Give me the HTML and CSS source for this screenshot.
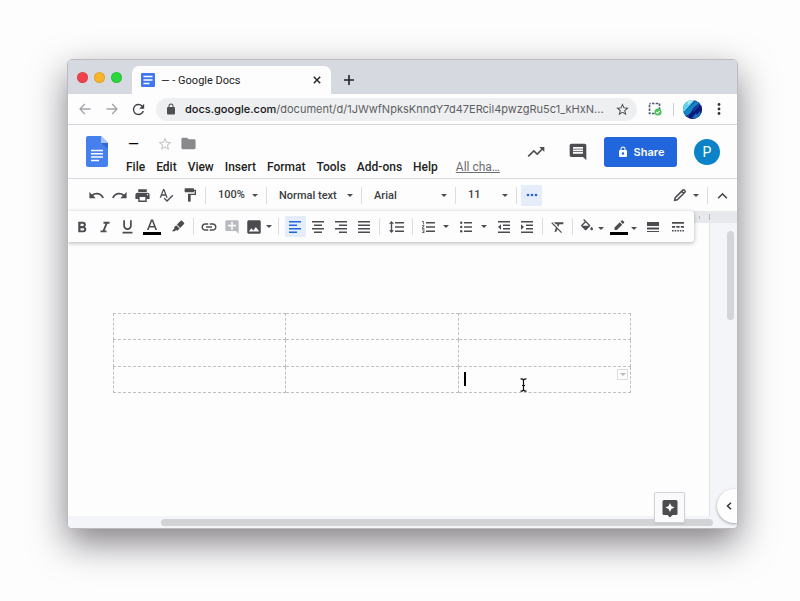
FILE: index.html
```html
<!DOCTYPE html>
<html lang="en">
<head>
<meta charset="utf-8">
<title>— - Google Docs</title>
<link rel="stylesheet" href="styles.css">
</head>
<body>
<main class="window">
  <div class="tabstrip">
    <div class="lights">
      <button class="light light-close" aria-label="Close window"></button>
      <button class="light light-min" aria-label="Minimize window"></button>
      <button class="light light-max" aria-label="Zoom window"></button>
    </div>
    <div class="tab">
      <svg class="favicon" viewBox="0 0 14 14"><rect width="14" height="14" rx="1" fill="#3f77ee"/><path d="M2.500 3.500h9M2.500 7h9M2.500 10.500h6" stroke="#fff" stroke-width="1.500"/></svg>
      <span class="tab-title">— - Google Docs</span>
      <button class="plain tab-close" aria-label="Close tab"><svg width="8" height="8" viewBox="0 0 8 8"><path d="M.8.8l6.400 6.400M7.200.8L.8 7.200" stroke="#222" stroke-width="1.400"/></svg></button>
    </div>
    <button class="plain new-tab" aria-label="New tab"><svg width="12" height="12" viewBox="0 0 12 12"><path d="M6 1v10M1 6h10" stroke="#222" stroke-width="1.600"/></svg></button>
  </div>

  <div class="navbar">
    <button class="plain nav-btn muted" aria-label="Back"><svg width="12" height="12" viewBox="0 0 12 12"><path d="M11.500 6H1.200M5.800 1L1 6l4.800 5" fill="none" stroke="currentColor" stroke-width="1.300"/></svg></button>
    <button class="plain nav-btn muted" aria-label="Forward"><svg width="12" height="12" viewBox="0 0 12 12"><path d="M.5 6h10.300M6.200 1L11 6l-4.800 5" fill="none" stroke="currentColor" stroke-width="1.300"/></svg></button>
    <button class="plain nav-btn" aria-label="Reload"><svg width="17" height="17" viewBox="0 0 24 24"><path fill="currentColor" d="M17.650 6.350A7.958 7.958 0 0 0 12 4a8 8 0 1 0 7.730 10h-2.080A6 6 0 1 1 12 6c1.660 0 3.140.69 4.220 1.780L13 11h7V4l-2.350 2.350z"/></svg></button>
    <div class="address">
      <svg width="12" height="12" viewBox="0 0 24 24"><path fill="#4d4f53" d="M18 8h-1V6A5 5 0 0 0 7 6v2H6a2 2 0 0 0-2 2v11a2 2 0 0 0 2 2h12a2 2 0 0 0 2-2V10a2 2 0 0 0-2-2zM9 8V6a3 3 0 0 1 6 0v2H9z"/></svg>
      <a class="url" href="#doc"><b>docs.google.com</b>/document/d/1JWwfNpksKnndY7d47ERcil4pwzgRu5c1_kHxN...</a>
      <button class="plain bookmark" aria-label="Bookmark"><svg width="15" height="15" viewBox="0 0 24 24"><path fill="#4a4c50" d="M22 9.240l-7.190-.62L12 2 9.190 8.630 2 9.240l5.460 4.730L5.820 21 12 17.270 18.180 21l-1.630-7.030L22 9.240zM12 15.400l-3.760 2.270 1-4.280-3.320-2.880 4.380-.38L12 6.100l1.710 4.040 4.380.38-3.320 2.880 1 4.280L12 15.400z"/></svg></button>
    </div>
    <button class="plain ext" aria-label="Capture extension"><svg width="14" height="14" viewBox="0 0 14 14"><rect x="1.500" y="1.500" width="10" height="10" fill="none" stroke="#4d5a75" stroke-width="1.600" stroke-dasharray="2.500 1.250" stroke-dashoffset="1.250"/><circle cx="10" cy="10" r="3.500" fill="#45c153"/><path d="M8.200 10l1.300 1.300 2.200-2.500" fill="none" stroke="#fff" stroke-width="1.100"/></svg></button>
    <span class="nav-rule"></span>
    <button class="plain profile" aria-label="Profile"><svg width="19" height="19" viewBox="0 0 19 19"><defs><clipPath id="round"><circle cx="9.500" cy="9.500" r="9.500"/></clipPath></defs><g clip-path="url(#round)"><path fill="#1b3a9c" d="M0 0h19v19H0z"/><path fill="#5ed5ee" d="M0 0h12L0 13z"/><path fill="#a7eef5" d="M4 0h7L5 5z"/><path fill="#1188c4" d="M1 12L13 1l3 2-6 5-2 5-5 3z"/><path fill="#0a1a7c" d="M6 15l4-5 1 2 6-7 2 1v9l-7 4H6z"/><path fill="#1d6cc0" d="M9 18l4-5 1 2 3-4 1 4-5 4z"/></g></svg></button>
    <button class="plain more" aria-label="Browser menu"><svg width="4" height="14" viewBox="0 0 4 14"><g fill="#333"><circle cx="2" cy="2.500" r="1.400"/><circle cx="2" cy="7" r="1.400"/><circle cx="2" cy="11.500" r="1.400"/></g></svg></button>
  </div>

  <header class="doc-head">
    <a class="logo" href="#home" aria-label="Docs home"><svg width="22" height="31" viewBox="0 0 22 31"><path fill="#4580ee" d="M2 0h13l7 7v22a2 2 0 0 1-2 2H2a2 2 0 0 1-2-2V2a2 2 0 0 1 2-2z"/><path fill="#a5c4fb" d="M15 0l7 7h-7z"/><path fill="#3467d2" d="M15 7h7v6z"/><path d="M5 14.500h12M5 17.800h12M5 21.100h12M5 24.400h8" stroke="#fff" stroke-width="1.500"/></svg></a>
    <div class="doc-info">
      <div class="title-row">
        <span class="doc-title">—</span>
        <button class="plain" aria-label="Star"><svg width="16" height="16" viewBox="0 0 24 24"><path fill="#c6c7ca" d="M22 9.240l-7.190-.62L12 2 9.190 8.630 2 9.240l5.460 4.730L5.820 21 12 17.270 18.180 21l-1.630-7.030L22 9.240zM12 15.400l-3.760 2.270 1-4.280-3.320-2.880 4.380-.38L12 6.100l1.710 4.040 4.380.38-3.320 2.880 1 4.280L12 15.400z"/></svg></button>
        <button class="plain" aria-label="Move"><svg width="17" height="17" viewBox="0 0 24 24"><path fill="#88898c" d="M10 4H4c-1.100 0-2 .9-2 2v12c0 1.100.9 2 2 2h16c1.100 0 2-.9 2-2V8c0-1.100-.9-2-2-2h-8l-2-2z"/></svg></button>
      </div>
      <nav class="menus">
        <button class="plain">File</button><button class="plain">Edit</button><button class="plain">View</button><button class="plain">Insert</button><button class="plain">Format</button><button class="plain">Tools</button><button class="plain">Add-ons</button><button class="plain">Help</button>
        <a class="saved" href="#history">All cha…</a>
      </nav>
    </div>
    <div class="head-actions">
      <button class="plain" aria-label="Activity"><svg width="20" height="20" viewBox="0 0 24 24"><path fill="#4c4e51" d="M16 6l2.290 2.290-4.880 4.880-4-4L2 16.590 3.410 18l6-6 4 4 6.300-6.290L22 12V6z"/></svg></button>
      <button class="plain" aria-label="Comments"><svg width="20" height="20" viewBox="0 0 24 24"><path fill="#4c4e51" d="M21.990 4c0-1.100-.89-2-1.990-2H4c-1.100 0-2 .9-2 2v12c0 1.100.9 2 2 2h14l4 4-.01-18zM18 14H6v-2h12v2zm0-3H6V9h12v2zm0-3H6V6h12v2z"/></svg></button>
      <button class="share"><svg width="12" height="12" viewBox="0 0 24 24"><path fill="#fff" d="M18 8h-1V6A5 5 0 0 0 7 6v2H6a2 2 0 0 0-2 2v10a2 2 0 0 0 2 2h12a2 2 0 0 0 2-2V10a2 2 0 0 0-2-2zM9 6a3 3 0 0 1 6 0v2H9zm3 11.500a2.500 2.500 0 1 1 0-5 2.500 2.500 0 0 1 0 5z"/></svg>Share</button>
      <button class="avatar" aria-label="Account">P</button>
    </div>
  </header>

  <div class="toolbar toolbar-main">
    <button class="plain" aria-label="Undo"><svg width="17" height="17" viewBox="0 0 24 24"><path d="M12.500 8c-2.650 0-5.050.99-6.900 2.600L2 7v9h9l-3.620-3.620c1.390-1.160 3.160-1.880 5.120-1.880 3.540 0 6.550 2.310 7.600 5.500l2.370-.78C21.080 11.030 17.150 8 12.500 8z"/></svg></button>
    <button class="plain" aria-label="Redo"><svg width="17" height="17" viewBox="0 0 24 24"><path d="M18.400 10.600C16.550 8.990 14.150 8 11.500 8c-4.650 0-8.580 3.030-9.960 7.220L3.900 16c1.050-3.190 4.050-5.500 7.600-5.500 1.950 0 3.730.72 5.120 1.880L13 16h9V7l-3.600 3.600z"/></svg></button>
    <button class="plain" aria-label="Print"><svg width="17" height="17" viewBox="0 0 24 24"><path d="M19 8H5c-1.660 0-3 1.340-3 3v6h4v4h12v-4h4v-6c0-1.660-1.340-3-3-3zm-3 11H8v-5h8v5zm3-7c-.55 0-1-.45-1-1s.45-1 1-1 1 .45 1 1-.45 1-1 1zm-1-9H6v4h12V3z"/></svg></button>
    <button class="plain" aria-label="Spelling check"><svg width="16" height="16" viewBox="0 0 24 24"><path d="M12.450 16h2.090L9.430 3H7.570L2.460 16h2.090l1.120-3h5.640l1.140 3zm-6.020-5L8.500 5.480 10.570 11H6.430zm15.160.59l-8.090 8.090L9.830 16l-1.410 1.410 5.090 5.090L23 13l-1.410-1.410z"/></svg></button>
    <button class="plain" aria-label="Paint format"><svg width="16" height="16" viewBox="0 0 24 24"><path d="M18 4V3c0-.55-.45-1-1-1H5c-.55 0-1 .45-1 1v4c0 .55.45 1 1 1h12c.55 0 1-.45 1-1V6h1v4H9v11c0 .55.45 1 1 1h2c.55 0 1-.45 1-1v-9h8V4h-3z"/></svg></button>
    <span class="sep"></span>
    <div class="pick raised"><select aria-label="Zoom"><option>100%</option></select></div>
    <span class="sep"></span>
    <div class="pick"><select aria-label="Style"><option>Normal text</option></select></div>
    <span class="sep"></span>
    <div class="pick"><select aria-label="Font"><option>Arial</option></select></div>
    <span class="sep"></span>
    <div class="pick raised"><select aria-label="Font size"><option>11</option></select></div>
    <span class="sep"></span>
    <button class="plain active" aria-label="More tools"><svg width="12" height="4" viewBox="0 0 12 4"><circle cx="2" cy="2" r="1.300"/><circle cx="6" cy="2" r="1.300"/><circle cx="10" cy="2" r="1.300"/></svg></button>
    <span></span>
    <button class="plain" aria-label="Editing mode"><svg width="14" height="14" viewBox="0 0 14 14"><path d="M1.700 12.300l.5-2.600 7.600-7.600a1 1 0 0 1 1.400 0l.7.7a1 1 0 0 1 0 1.400l-7.600 7.600zM8.600 3.400l2 2" fill="none" stroke="#4a4c4f" stroke-width="1.500"/></svg></button>
    <span class="caret"></span>
    <span class="sep"></span>
    <button class="plain" aria-label="Hide menus"><svg width="17" height="17" viewBox="0 0 24 24"><path d="M12 8l-7 7 1.700 1.700L12 11.400l5.300 5.300L19 15z"/></svg></button>
  </div>

  <section class="workspace">
    <div class="toolbar toolbar-format">
      <button class="plain" aria-label="Bold"><svg width="18" height="18" viewBox="0 0 24 24"><path d="M15.600 11.790c.97-.67 1.650-1.770 1.650-2.790 0-2.260-1.750-4-4-4H7v14h7.040c2.090 0 3.710-1.700 3.710-3.790 0-1.520-.86-2.820-2.150-3.420zM10 7.500h3c.83 0 1.500.67 1.500 1.500s-.67 1.500-1.500 1.500h-3v-3zm3.500 9H10v-3h3.500c.83 0 1.500.67 1.500 1.500s-.67 1.500-1.500 1.500z"/></svg></button>
      <button class="plain" aria-label="Italic"><svg width="18" height="18" viewBox="0 0 24 24"><path d="M10 5v2.500h2.600l-3.700 9H6V19h8v-2.500h-2.400l3.700-9H18V5z"/></svg></button>
      <button class="plain" aria-label="Underline"><svg width="17" height="17" viewBox="0 0 24 24"><path d="M12 17c3.310 0 6-2.690 6-6V3h-2.500v8c0 1.930-1.570 3.500-3.500 3.500S8.500 12.930 8.500 11V3H6v8c0 3.310 2.690 6 6 6zm-7 2.500V22h14v-2.500H5z"/></svg></button>
      <button class="plain" aria-label="Text color"><svg width="18" height="18" viewBox="0 0 18 18"><path d="M8 1.500L3.900 12h1.700l.9-2.400h5L12.400 12h1.700L10 1.500zM7.100 8.100L9 3.200l1.900 4.900z"/><path fill="#000" d="M0 14h18v3H0z"/></svg></button>
      <button class="plain" aria-label="Highlight color"><svg width="14" height="14" viewBox="0 0 14 14"><path d="M9.700.8a1 1 0 0 1 1.400 0L13 2.700a1 1 0 0 1 0 1.400L9.200 7.900 5.900 4.600zM5.200 5.200l3.400 3.400-1.700 1.700a1 1 0 0 1-1.400 0l-.4-.4-1.300 1.300H.8l2.700-2.700-.1-.1a1 1 0 0 1 0-1.400z"/></svg></button>
      <span class="sep"></span>
      <button class="plain" aria-label="Insert link"><svg width="18" height="18" viewBox="0 0 24 24"><path d="M3.900 12c0-1.710 1.390-3.100 3.100-3.100h4V7H7c-2.760 0-5 2.240-5 5s2.240 5 5 5h4v-1.900H7c-1.710 0-3.100-1.390-3.100-3.100zM8 13h8v-2H8v2zm9-6h-4v1.900h4c1.710 0 3.100 1.390 3.100 3.100s-1.390 3.100-3.100 3.100h-4V17h4c2.760 0 5-2.240 5-5s-2.240-5-5-5z"/></svg></button>
      <button class="plain faded" aria-label="Add comment"><svg width="16" height="16" viewBox="0 0 24 24"><path d="M22 4c0-1.100-.9-2-2-2H4c-1.100 0-2 .9-2 2v12c0 1.100.9 2 2 2h14l4 4V4zm-4 7.200h-4.800V16h-2.400v-4.800H6V8.800h4.800V4h2.400v4.800H18v2.400z"/></svg></button>
      <button class="plain" aria-label="Insert image"><svg width="18" height="18" viewBox="0 0 24 24"><path d="M21 19V5c0-1.100-.9-2-2-2H5c-1.100 0-2 .9-2 2v14c0 1.100.9 2 2 2h14c1.100 0 2-.9 2-2zM8.500 13.500l2.500 3.010L14.500 12l4.500 6H5l3.500-4.500z"/></svg></button>
      <span class="caret"></span>
      <span class="sep"></span>
      <button class="plain active" aria-label="Align left"><svg width="12" height="12" viewBox="0 0 12 12"><path d="M0 0h12v1.500H0zM0 3.500h8V5H0zM0 7h12v1.500H0zM0 10.500h8V12H0z"/></svg></button>
      <button class="plain" aria-label="Align center"><svg width="12" height="12" viewBox="0 0 12 12"><path d="M0 0h12v1.500H0zM2 3.500h8V5H2zM0 7h12v1.500H0zM2 10.500h8V12H2z"/></svg></button>
      <button class="plain" aria-label="Align right"><svg width="12" height="12" viewBox="0 0 12 12"><path d="M0 0h12v1.500H0zM4 3.500h8V5H4zM0 7h12v1.500H0zM4 10.500h8V12H4z"/></svg></button>
      <button class="plain" aria-label="Justify"><svg width="12" height="12" viewBox="0 0 12 12"><path d="M0 0h12v1.500H0zM0 3.500h12V5H0zM0 7h12v1.500H0zM0 10.500h12V12H0z"/></svg></button>
      <span class="sep"></span>
      <button class="plain" aria-label="Line spacing"><svg width="15" height="12" viewBox="0 0 15 12"><path d="M6 1h9v1.500H6zM6 5.200h9v1.500H6zM6 9.500h9V11H6zM2.500 0L5 2.700H3.200v6.600H5L2.500 12 0 9.300h1.800V2.700H0z"/></svg></button>
      <span class="sep"></span>
      <button class="plain" aria-label="Numbered list"><svg width="13" height="12" viewBox="0 0 13 12"><path d="M4 1h9v1.500H4zM4 5.200h9v1.500H4zM4 9.500h9V11H4zM0 0h1.700v3.400h-.8V.7H0zM0 4.200h2.400v.9L1 6.900h1.400v.8H0v-.9L1.400 5H0zM0 8.500h2.400V12H0v-.7h1.600v-.7H.8v-.6h.8v-.8H0z"/></svg></button>
      <span class="caret"></span>
      <button class="plain" aria-label="Bulleted list"><svg width="12" height="12" viewBox="0 0 12 12"><path d="M4 1h8v1.500H4zM4 5.200h8v1.500H4zM4 9.500h8V11H4z"/><circle cx="1.200" cy="1.700" r="1.200"/><circle cx="1.200" cy="6" r="1.200"/><circle cx="1.200" cy="10.300" r="1.200"/></svg></button>
      <span class="caret"></span>
      <button class="plain" aria-label="Decrease indent"><svg width="12" height="12" viewBox="0 0 12 12"><path d="M0 0h12v1.500H0zM5 3.500h7V5H5zM5 7h7v1.500H5zM0 10.500h12V12H0zM3 3.300v5.400L0 6z"/></svg></button>
      <button class="plain" aria-label="Increase indent"><svg width="12" height="12" viewBox="0 0 12 12"><path d="M0 0h12v1.500H0zM5 3.500h7V5H5zM5 7h7v1.500H5zM0 10.500h12V12H0zM0 3.300v5.400L3 6z"/></svg></button>
      <span class="sep"></span>
      <button class="plain" aria-label="Clear formatting"><svg width="16" height="16" viewBox="0 0 24 24"><path d="M3.270 5L2 6.270l6.970 6.970L6.500 19h3l1.570-3.660L16.730 21 18 19.730 3.550 5.270 3.270 5zM6 5v.18L8.820 8h2.400l-.72 1.680 2.100 2.100L14.210 8H20V5H6z"/></svg></button>
      <span class="sep"></span>
      <button class="plain" aria-label="Cell background"><svg width="16" height="16" viewBox="0 0 24 24"><path d="M16.560 8.940L7.620 0 6.210 1.410l2.380 2.380-5.150 5.150c-.59.590-.59 1.540 0 2.120l5.500 5.500c.29.290.68.440 1.060.44s.77-.15 1.060-.44l5.500-5.500c.59-.58.59-1.530 0-2.120zM5.210 10L10 5.210 14.790 10H5.210zM19 11.500s-2 2.170-2 3.500c0 1.100.9 2 2 2s2-.9 2-2c0-1.330-2-3.500-2-3.500z"/></svg></button>
      <span class="caret low"></span>
      <button class="plain" aria-label="Border color"><svg width="18" height="18" viewBox="0 0 18 18"><path d="M4.500 9.600V12h2.400l5.300-5.300-2.400-2.400zM10.500 3.600L12.900 6l1.200-1.200c.3-.3.300-.7 0-1l-1.400-1.400a.7.700 0 0 0-1 0z"/><path fill="#000" d="M0 14h18v3H0z"/></svg></button>
      <span class="caret low"></span>
      <button class="plain" aria-label="Border width"><svg width="12" height="12" viewBox="0 0 12 12"><path d="M0 1h12v4H0zM0 6.500h12v2H0zM0 10h12v1H0z"/></svg></button>
      <button class="plain" aria-label="Border dash"><svg width="12" height="12" viewBox="0 0 12 12"><path d="M0 1h12v1.800H0zM0 5h3.200v1.800H0zM4.400 5h3.200v1.800H4.400zM8.800 5H12v1.800H8.800zM0 9h1.600v1.600H0zM2.600 9h1.600v1.600H2.600zM5.200 9h1.600v1.600H5.200zM7.800 9h1.600v1.600H7.800zM10.400 9H12v1.600h-1.600z"/></svg></button>
    </div>

    <div class="ruler"><i></i><i class="tall"></i></div>
    <div class="canvas">
      <article class="page" id="doc">
        <table class="grid" aria-label="Document table">
          <tbody>
          <tr><td></td><td></td><td></td></tr>
          <tr><td></td><td></td><td></td></tr>
          <tr><td></td><td></td><td class="current">
            <span class="text-caret"></span>
            <svg class="pointer" width="7" height="14" viewBox="0 0 7 14"><path d="M.5.8c1.500 0 3 .3 3 1.700v9c0 1.400-1.500 1.700-3 1.700M6.500.8c-1.500 0-3 .3-3 1.700v9c0 1.400 1.500 1.700 3 1.700M2 7.500h3" fill="none" stroke="#111" stroke-width="1.200"/></svg>
            <button class="cell-menu" aria-label="Cell options"></button>
          </td></tr>
          </tbody>
        </table>
      </article>
      <div class="gutter"><span class="thumb-v"></span></div>
    </div>
    <div class="bottom-bar"><span class="thumb-h"></span></div>
    <button class="explore" aria-label="Explore"><svg width="20" height="20" viewBox="0 0 20 20"><path fill="#4b4c4e" fill-rule="evenodd" d="M4 2h12a1.500 1.500 0 0 1 1.500 1.500v12A1.500 1.500 0 0 1 16 17h-3.500L10 19.500 7.500 17H4a1.500 1.500 0 0 1-1.500-1.500v-12A1.500 1.500 0 0 1 4 2zm6 3L8.600 8.100 5.500 9.500l3.100 1.400L10 14l1.400-3.100 3.100-1.400-3.100-1.400z"/></svg></button>
    <button class="side-toggle" aria-label="Show side panel"><svg width="6" height="8" viewBox="0 0 6 8"><path d="M5 .7L1.500 4 5 7.300" fill="none" stroke="#333" stroke-width="1.500"/></svg></button>
  </section>
</main>
</body>
</html>
```
FILE: styles.css
```css
* { box-sizing: border-box; }

body {
  margin: 0;
  min-height: 100vh;
  padding: 59px 62px 72px 67px;
  display: flex;
  background: #fdfdfe;
  font-family: Roboto, "Liberation Sans", sans-serif;
  font-size: 12px;
  color: #202124;
}

button, select { font: inherit; color: inherit; }

.plain {
  display: inline-flex;
  align-items: center;
  justify-content: center;
  padding: 0;
  border: 0;
  background: none;
}

svg { display: block; flex: none; }

.window {
  flex: 1;
  min-width: 0;
  display: flex;
  flex-direction: column;
  border: 1px solid #b9bbbf;
  border-radius: 5px;
  background: #fdfdfe;
  box-shadow: 0 14px 36px rgba(10, 0, 10, .5);
  overflow: hidden;
}

/* Browser chrome */
.tabstrip {
  display: flex;
  height: 34px;
  background: #d6dae0;
}

.lights {
  display: flex;
  align-items: center;
  gap: 6px;
  padding: 0 10px 0 9px;
  height: 34px;
}

.light {
  width: 11px;
  height: 11px;
  padding: 0;
  border: 1px solid rgba(0, 0, 0, .1);
  border-radius: 50%;
}
.light-close { background: #f0444d; }
.light-min { background: #f8b52b; }
.light-max { background: #2bd73d; }

.tab {
  display: flex;
  align-items: center;
  gap: 6px;
  width: 199px;
  margin-top: 6px;
  padding: 0 10px 0 9px;
  border-radius: 7px 7px 0 0;
  background: #fdfdfe;
}
.favicon { width: 14px; height: 14px; }
.tab-title {
  flex: 1;
  font-size: 11px;
}
.new-tab { width: 36px; margin-top: 6px; }

.navbar {
  display: flex;
  align-items: center;
  height: 31px;
  padding: 0 10px 0 3px;
  border-bottom: 1px solid #d5d6d9;
  color: #3f4145;
}
.nav-btn { width: 27px; height: 24px; }
.muted { color: #a3a5a9; }

.address {
  flex: 1;
  min-width: 0;
  display: flex;
  align-items: center;
  height: 23px;
  margin-left: 4px;
  padding: 0 7px 0 9px;
  border-radius: 12px;
  background: #eeeff1;
}
.url {
  flex: 1;
  min-width: 0;
  overflow: hidden;
  margin-left: 8px;
  font-family: Inter, "Liberation Sans", sans-serif;
  font-size: 11px;
  line-height: 20px;
  white-space: nowrap;
  text-decoration: none;
  color: #5d5f63;
}
.url b { font-weight: 500; color: #151515; }
.ext { width: 36px; }
.nav-rule { width: 1px; height: 13px; background: #cdced2; }
.profile { width: 37px; }
.more { width: 16px; }

/* Document header */
.doc-head {
  display: flex;
  align-items: flex-start;
  height: 54px;
  padding: 0 17px 0 18px;
  border-bottom: 1px solid #d9dadd;
}
.logo { margin-top: 11px; }
.doc-info { flex: 1; min-width: 0; padding: 10px 0 0 18px; }
.title-row {
  display: flex;
  align-items: center;
  gap: 7px;
  height: 17px;
}
.doc-title { width: 24px; padding-left: 2px; font-size: 14px; color: #000; }
.menus {
  display: flex;
  align-items: center;
  gap: 11px;
  height: 29px;
  font-size: 12px;
  font-weight: 500;
  color: #1e1f21;
}
.saved { margin-left: 7px; font-weight: 400; color: #6c6e72; white-space: nowrap; }

.head-actions {
  display: flex;
  align-items: center;
  height: 53px;
}
.head-actions > .plain { width: 42px; }
.share {
  display: flex;
  align-items: center;
  justify-content: center;
  gap: 5px;
  width: 73px;
  height: 30px;
  margin: 0 17px 0 5px;
  padding: 0;
  border: 0;
  border-radius: 3px;
  background: #2166dc;
  font-family: Inter, "Liberation Sans", sans-serif;
  font-size: 11px;
  font-weight: 600;
  color: #fff;
}
.avatar {
  width: 26px;
  height: 26px;
  padding: 0;
  border: 0;
  border-radius: 50%;
  background: #0c83c8;
  font-size: 14px;
  color: #fff;
}

/* Toolbars */
.toolbar {
  display: grid;
  align-items: center;
  justify-items: center;
  fill: #4a4c4f;
}
.toolbar-main {
  grid-template-columns:
    23px 23px 23px 23px 26px 5px 56px 5px 90px 5px 89px 5px 56px 5px 25px
    1fr 24px 8px 14px 16px;
  height: 32px;
  padding: 0 7px 0 17px;
}
.toolbar-format {
  position: absolute;
  top: 0;
  left: 0;
  z-index: 2;
  grid-template-columns:
    23px 23px 23px 25px 27px 5px 25px 22px 22px 7px 12px
    22px 23px 23px 24px 7px 26px 6px 26px 10px 30px 6px 33px 14px
    16px 15px 14px 16px 12px 24px 6px 32px 18px;
  height: 31px;
  padding: 0 7px 0 2px;
  border-radius: 0 3px 3px 0;
  background: #fdfdfe;
  box-shadow: 0 1px 4px rgba(0, 0, 0, .3);
}
.sep { width: 1px; height: 17px; background: #dcdde0; }
.caret {
  border: 3px solid transparent;
  border-top-color: #4a4c4f;
  border-bottom: 0;
}
.low { margin-top: 4px; }
.active {
  width: 21px;
  height: 21px;
  border-radius: 1px;
  background: #e5edfb;
  fill: #2166dc;
}
.faded { fill: #b9babd; }

.pick {
  position: relative;
  width: 100%;
}
.pick::after {
  content: "";
  position: absolute;
  right: 6px;
  top: 8px;
  border: 3px solid transparent;
  border-top-color: #4a4c4f;
  border-bottom: 0;
}
.pick select {
  appearance: none;
  width: 100%;
  height: 18px;
  padding: 0 0 0 10px;
  border: 0;
  background: none;
  font-size: 11px;
  font-weight: 500;
  color: #3c3e41;
}
.raised select { padding-bottom: 2px; }

/* Editing area */
.workspace {
  position: relative;
  flex: 1;
  display: flex;
  flex-direction: column;
}
.ruler {
  display: flex;
  justify-content: flex-end;
  align-items: center;
  gap: 9px;
  height: 12px;
  padding-right: 27px;
  background: #e6e8ec;
}
.ruler i { width: 1px; height: 3px; background: #b4b6ba; }
.ruler .tall { height: 6px; }

.canvas { flex: 1; display: flex; }
.page {
  flex: 1;
  padding: 90px 78px 0 45px;
  border-right: 1px solid #dfe1e4;
}
.gutter {
  display: flex;
  justify-content: flex-end;
  width: 27px;
  padding: 8px 3px 0 0;
  background: #f3f5f9;
}
.thumb-v { width: 7px; height: 89px; border-radius: 4px; background: #d4d5d7; }

.bottom-bar {
  height: 12px;
  padding: 3px 24px 0 93px;
  background: #f3f5f9;
}
.thumb-h { display: block; height: 7px; border-radius: 4px; background: #d2d3d5; }

.grid {
  width: 100%;
  height: 80px;
  border-collapse: collapse;
  table-layout: fixed;
}
.grid td {
  height: 26px;
  padding: 0;
  border: 1px dashed #bfc0c3;
}
.current { position: relative; }
.text-caret {
  display: block;
  width: 2px;
  height: 14px;
  margin-left: 5px;
  background: #000;
}
.pointer { position: absolute; left: 61px; top: 11px; }
.cell-menu {
  position: absolute;
  right: 2px;
  top: 2px;
  width: 11px;
  height: 11px;
  padding: 0;
  border: 1px solid #dcdde0;
  background: #fdfdfe;
}
.cell-menu::after {
  content: "";
  position: absolute;
  left: 2px;
  top: 3px;
  border: 3px solid transparent;
  border-top-color: #b8b9bc;
  border-bottom: 0;
}

.explore {
  position: absolute;
  right: 52px;
  bottom: 5px;
  display: grid;
  place-items: center;
  width: 31px;
  height: 31px;
  padding: 0;
  border: 1px solid #d2d3d6;
  border-radius: 2px;
  background: #fafafc;
  box-shadow: 0 1px 2px rgba(0, 0, 0, .1);
}
.side-toggle {
  position: absolute;
  right: 0;
  bottom: 5px;
  display: flex;
  align-items: center;
  width: 20px;
  height: 34px;
  padding: 0 0 0 9px;
  border: 0;
  border-radius: 17px 0 0 17px;
  background: #fdfdfe;
  box-shadow: 0 1px 3px rgba(0, 0, 0, .35);
}
```
